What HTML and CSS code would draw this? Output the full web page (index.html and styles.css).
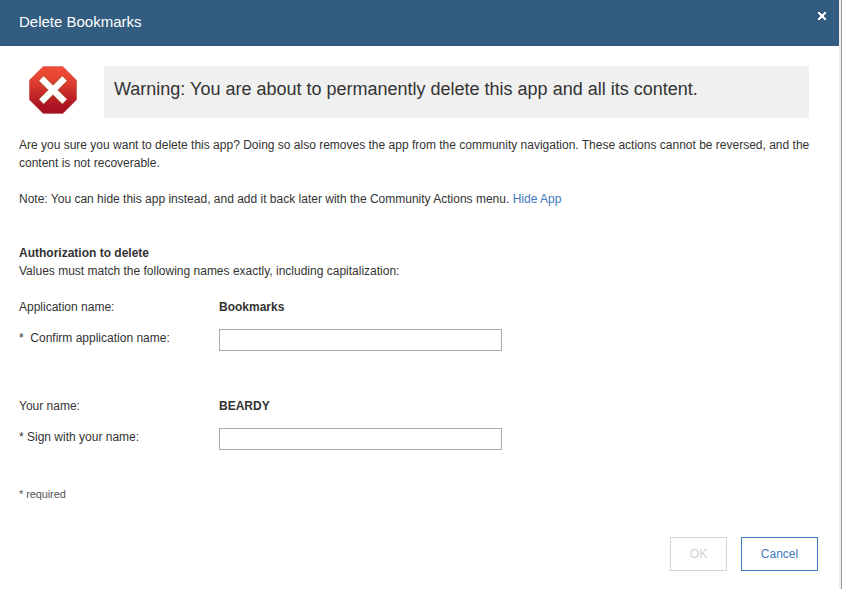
FILE: index.html
```html
<!DOCTYPE html>
<html lang="en">
<head>
<meta charset="utf-8">
<title>Delete Bookmarks</title>
<link rel="stylesheet" href="styles.css">
</head>
<body>
<main class="dialog">
  <header class="titlebar">
    <h1>Delete Bookmarks</h1>
    <button class="close" aria-label="Close"><svg width="8" height="8" viewBox="0 0 8 8" shape-rendering="crispEdges"><path fill="#fff" d="M0 0h2v1h1v1h2V1h1V0h2v2H7v1H6v2h1v1h1v2H6V7H5V6H3v1H2v1H0V6h1V5h1V3H1V2H0z"/></svg></button>
  </header>
  <div class="content">
    <div class="warning">
      <svg class="stop" width="48" height="48" viewBox="0 0 48 48">
        <defs><linearGradient id="red" x1="0" y1="0" x2="0" y2="1"><stop offset="0" stop-color="#f04e37"/><stop offset=".25" stop-color="#e64532"/><stop offset=".85" stop-color="#ab1322"/><stop offset="1" stop-color="#a50e20"/></linearGradient></defs>
        <path fill="url(#red)" stroke="#a32018" stroke-opacity=".45" stroke-width=".7" d="M14.2.4h19.6l13.8 13.8v19.6L33.8 47.6H14.2L.4 33.8V14.2z"/>
        <path fill="none" stroke="#8b6a22" stroke-opacity=".6" stroke-width="7.4" d="m12.2 12.2 23.6 23.6m0-23.6-23.6 23.6"/>
        <path fill="none" stroke="#fff" stroke-width="6.4" stroke-linejoin="round" d="m12.4 12.4 23.2 23.2m0-23.2-23.2 23.2"/>
      </svg>
      <p class="message"><span>Warning: You are about to permanently delete this app and all its content.</span></p>
    </div>
    <p class="copy"><span>Are you sure you want to delete this app? Doing so also removes the app from the community navigation. These actions cannot be reversed, and the</span><br><span>content is not recoverable.</span></p>
    <p class="copy note"><span>Note: You can hide this app instead, and add it back later with the Community Actions menu.</span> <a href="#">Hide App</a></p>
    <h2>Authorization to delete</h2>
    <p class="hint"><span>Values must match the following names exactly, including capitalization:</span></p>
    <div class="group">
      <div class="row"><span class="label">Application name:</span><strong>Bookmarks</strong></div>
      <div class="row entry"><label class="label" for="app">*&nbsp; Confirm application name:</label><input id="app" type="text"></div>
    </div>
    <div class="group">
      <div class="row"><span class="label">Your name:</span><strong class="user">BEARDY</strong></div>
      <div class="row entry"><label class="label" for="sign">* Sign with your name:</label><input id="sign" type="text"></div>
    </div>
    <p class="required">* required</p>
  </div>
  <footer class="actions"><button disabled>OK</button><button class="cancel">Cancel</button></footer>
</main>
</body>
</html>
```
FILE: styles.css
```css
* { box-sizing: border-box; }
body { margin: 0; height: 589px; overflow: hidden; background: #fff; color: #333; font: 12px/18px "Liberation Sans", Arial, sans-serif; }
h1, h2, p { margin: 0; }
.dialog { width: 842px; height: 589px; border-right: 1px solid #999; box-shadow: inset -2px 0 #eee; }
.titlebar { display: flex; justify-content: space-between; width: 839px; height: 46px; padding: 12px 13px 0 19px; background: #325c80; color: #fff; }
h1 { font-size: 15px; line-height: 20px; font-weight: 400; }
.close { width: 8px; height: 8px; padding: 0; border: 0; background: none; }
.close svg { display: block; }
.content { padding: 20px 29px 0 19px; }
.warning { display: flex; margin-bottom: 18px; }
.stop { margin: 0 27px 0 10px; }
.message { width: 705px; height: 52px; padding: 11px 10px; background: #f0f0f0; font-size: 18px; line-height: 24px; }
.copy { white-space: nowrap; }
.note { margin-top: 18px; }
a { color: #4178be; text-decoration: none; }
h2 { margin-top: 36px; font-size: 12px; line-height: 18px; }
.hint { margin-bottom: 18px; }
.row { display: flex; height: 18px; }
.label { width: 200px; }
.entry { height: 22px; margin-top: 13px; }
.entry input { width: 283px; height: 22px; border: 1px solid #aaa; background: #fff; }
.group + .group { margin-top: 46px; }
.required { margin-top: 35px; font-size: 11px; color: #555; letter-spacing: -.1px; }
.actions { display: flex; justify-content: flex-end; gap: 14px; margin-top: 34px; padding-right: 23px; }
.actions button { width: 57px; height: 34px; padding: 0; border: 1px solid #d4d4d4; background: #fff; color: #d0d0d0; font: inherit; }
.actions .cancel { width: 77px; border-color: #4178be; color: #4178be; }
```
